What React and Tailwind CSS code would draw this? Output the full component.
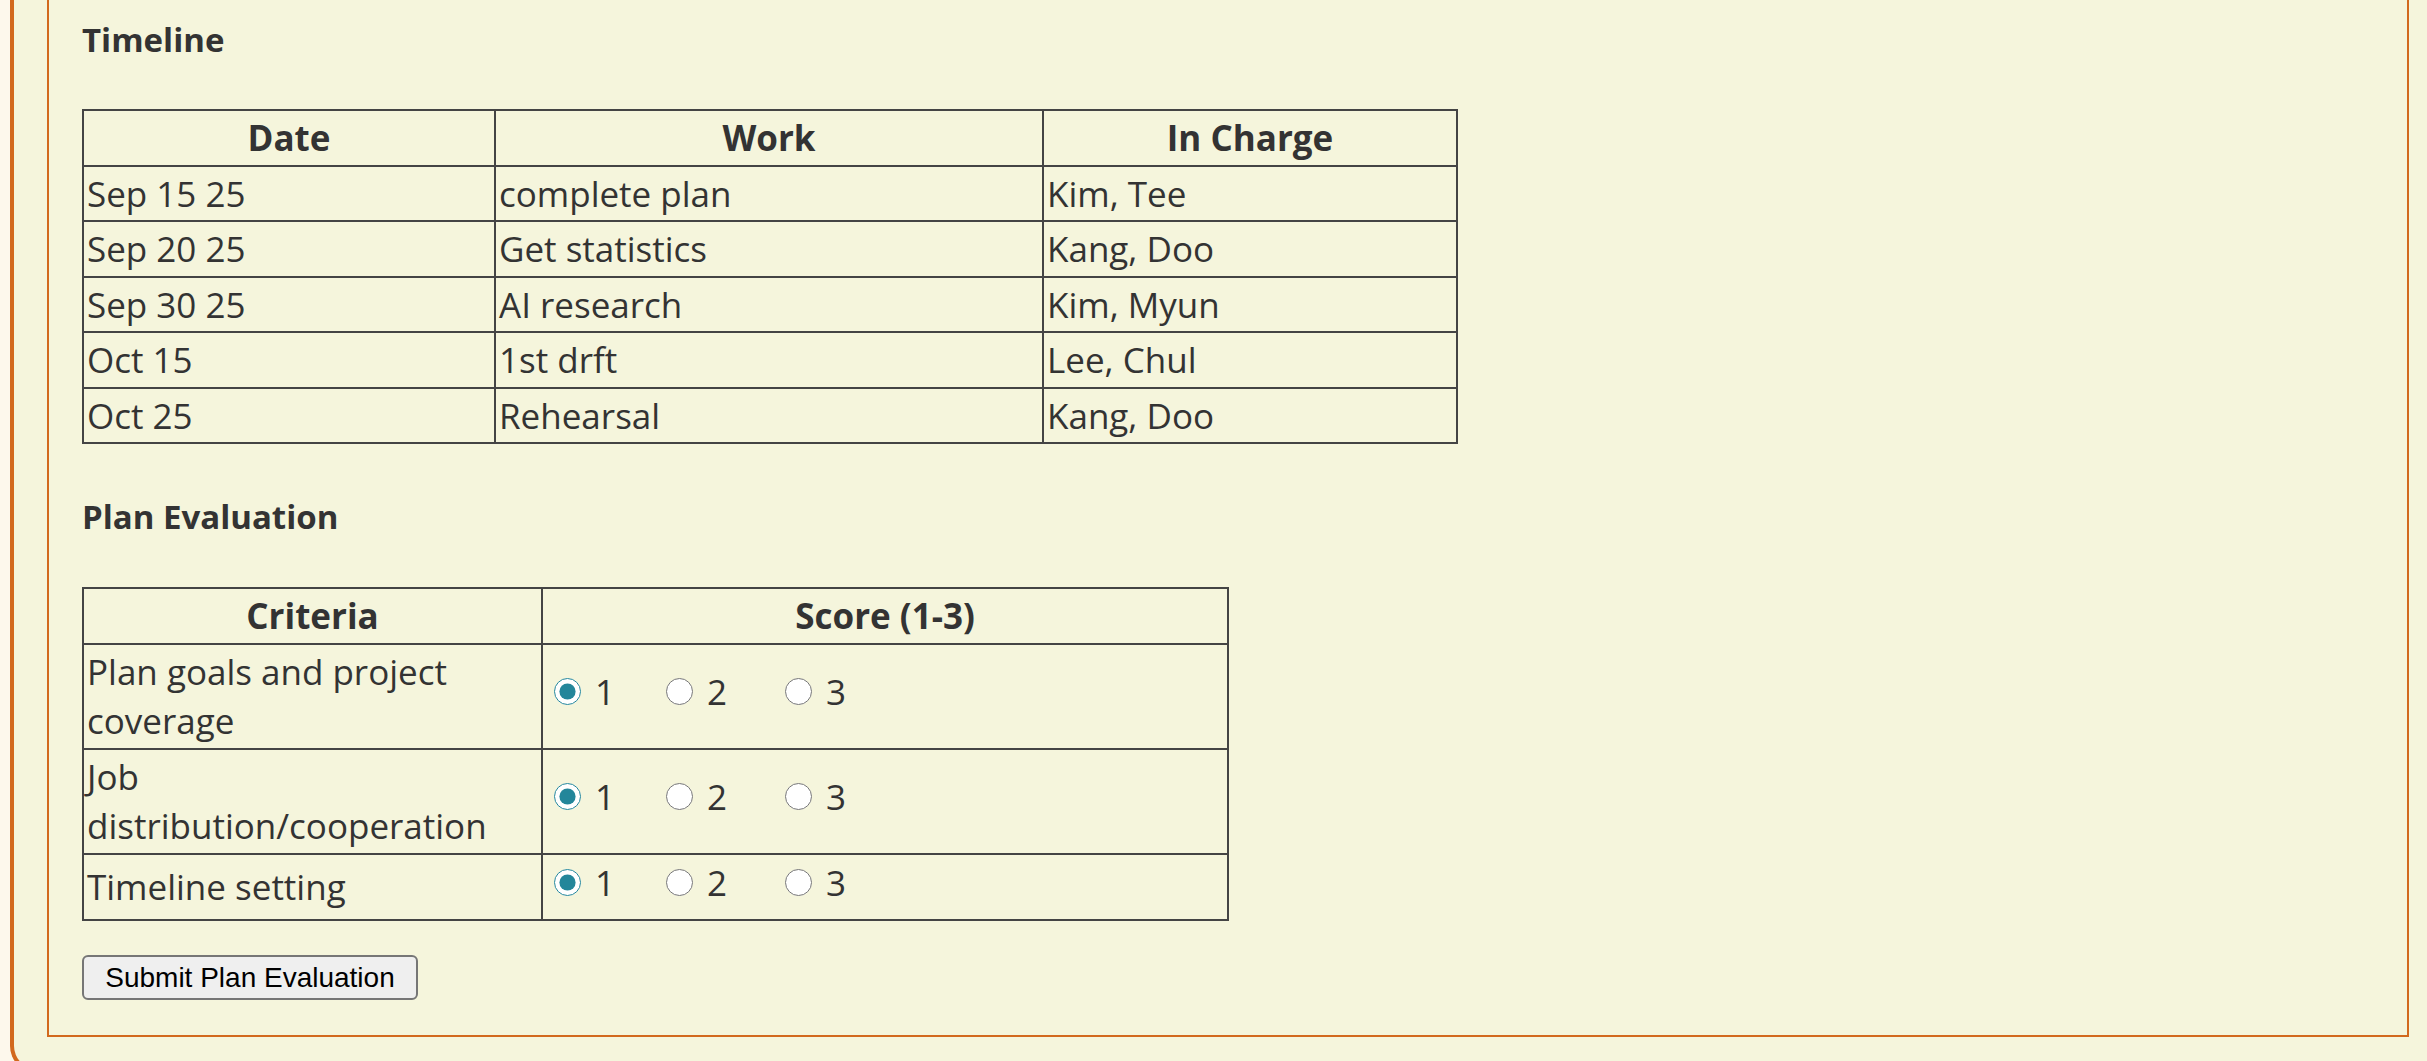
import React from "react";

const font = { fontFamily: '"Open Sans", "DejaVu Sans", sans-serif' };

const timeline = [
  ["Sep 15 25", "complete plan", "Kim, Tee"],
  ["Sep 20 25", "Get statistics", "Kang, Doo"],
  ["Sep 30 25", "AI research", "Kim, Myun"],
  ["Oct 15", "1st drft", "Lee, Chul"],
  ["Oct 25", "Rehearsal", "Kang, Doo"],
];

const criteria = [
  ["Plan goals and project", "coverage"],
  ["Job", "distribution/cooperation"],
  ["Timeline setting"],
];

function Radios({ name }) {
  return (
    <div className="flex items-center h-[60px] pb-[9px]">
      <label className="flex items-center w-[112px] shrink-0 ml-[10px]">
        <input type="radio" name={name} defaultChecked className="w-[27px] h-[27px] m-0 accent-[#23869a]" />
        <span className="ml-[14px] leading-[35px]">1</span>
      </label>
      <label className="flex items-center w-[119px] shrink-0">
        <input type="radio" name={name} className="w-[27px] h-[27px] m-0 accent-[#23869a]" />
        <span className="ml-[14px] leading-[35px]">2</span>
      </label>
      <label className="flex items-center shrink-0">
        <input type="radio" name={name} className="w-[27px] h-[27px] m-0 accent-[#23869a]" />
        <span className="ml-[14px] leading-[35px]">3</span>
      </label>
    </div>
  );
}

export default function App() {
  return (
    <div className="h-[1061px] overflow-hidden bg-[#fdf8ec]" style={font}>
      <div className="ml-[10px] pr-[18px] pl-[33px] pb-[32px] border-l-4 border-b-4 border-[#d2691e] rounded-bl-[27px] bg-[#f5f5dc]">
        <div className="border-l-2 border-r-2 border-b-2 border-[#d2691e] bg-[#f5f5dc] pl-[33px] pb-[35px] text-[#333]">
          <div className="pt-[20px] text-[33px] leading-[40px] font-bold">Timeline</div>
          <table className="mt-[49px] table-fixed border-collapse w-[1374px] text-[35px] leading-[49.5px]">
            <colgroup>
              <col className="w-[412px]" />
              <col className="w-[548px]" />
              <col className="w-[414px]" />
            </colgroup>
            <thead>
              <tr>
                {["Date", "Work", "In Charge"].map((h) => (
                  <th key={h} className="border-2 border-[#444] py-[2px] px-[3px] font-bold text-center">{h}</th>
                ))}
              </tr>
            </thead>
            <tbody>
              {timeline.map((r) => (
                <tr key={r[0]}>
                  {r.map((c, i) => (
                    <td key={i} className="border-2 border-[#444] py-[2px] px-[3px] text-left whitespace-nowrap">{c}</td>
                  ))}
                </tr>
              ))}
            </tbody>
          </table>

          <div className="mt-[53px] text-[33px] leading-[40px] font-bold">Plan Evaluation</div>
          <table className="mt-[50px] table-fixed border-collapse w-[1145px] text-[35px] leading-[49.5px]">
            <colgroup>
              <col className="w-[459px]" />
              <col className="w-[686px]" />
            </colgroup>
            <thead>
              <tr>
                <th className="border-2 border-[#444] py-[2px] px-[3px] font-bold text-center">Criteria</th>
                <th className="border-2 border-[#444] py-[2px] px-[3px] font-bold text-center">Score (1-3)</th>
              </tr>
            </thead>
            <tbody>
              {criteria.map((c, idx) => (
                <tr key={idx}>
                  <td className="border-2 border-[#444] py-[2px] px-[3px] align-middle text-left">
                    {c.map((line, j) => (
                      <div key={j} className="whitespace-nowrap">{line}</div>
                    ))}
                  </td>
                  <td className="border-2 border-[#444] py-[2px] px-[1px] align-middle">
                    <Radios name={"c" + idx} />
                  </td>
                </tr>
              ))}
            </tbody>
          </table>

          <button
            type="button"
            className="mt-[34px] w-[336px] h-[45px] bg-[#efefef] border-2 border-[#767676] rounded-[6px] text-black text-[28px] leading-[41px] flex items-center justify-center"
            style={{ fontFamily: '"Liberation Sans", Arial, sans-serif' }}
          >
            Submit Plan Evaluation
          </button>
        </div>
      </div>
    </div>
  );
}
